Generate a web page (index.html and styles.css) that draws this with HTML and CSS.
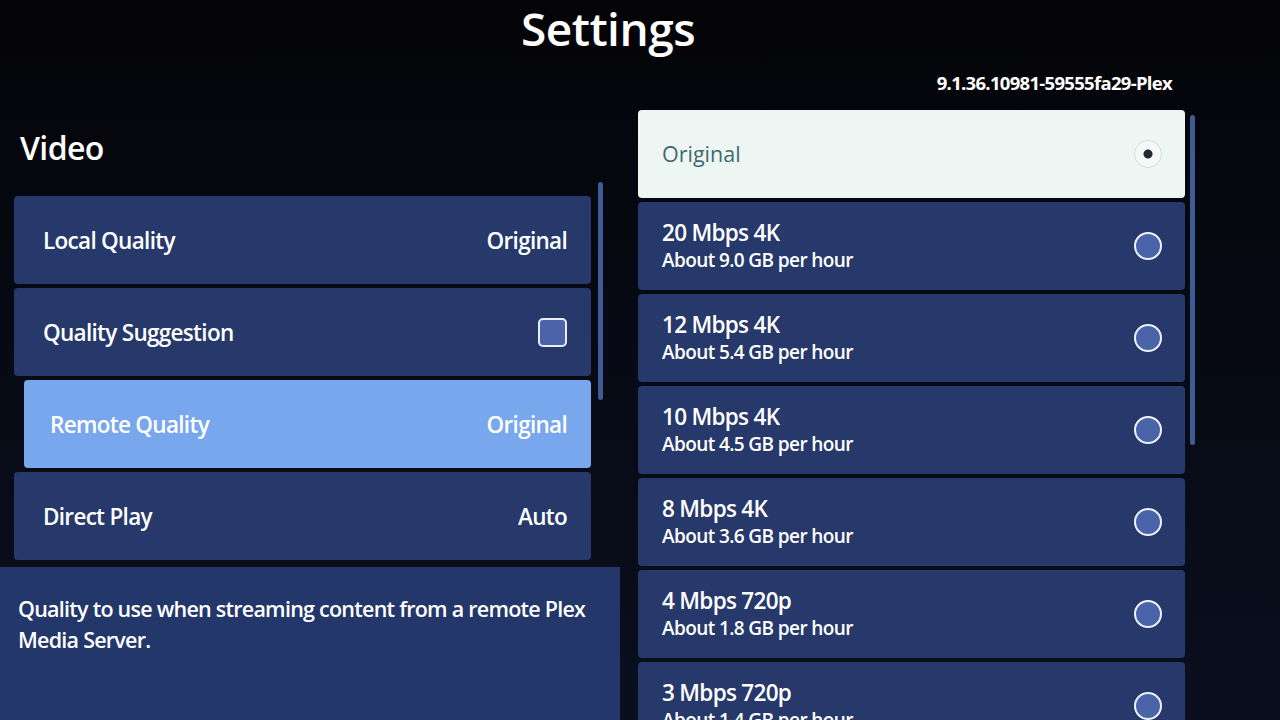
FILE: index.html
```html
<!DOCTYPE html>
<html lang="en">
<head>
    <meta charset="UTF-8">
    <meta name="viewport" content="width=device-width, initial-scale=1.0">
    <title>Settings</title>
    <link rel="stylesheet" href="styles.css">
</head>
<body>

<div class="page">
    <h1 class="title">Settings</h1>

    <div class="columns">
        <!-- Coloana stanga: setari video -->
        <div class="left-panel">
            <h2 class="section-title">Video</h2>

            <div class="list-wrap">
                <div class="settings-list">
                    <div class="setting-row">
                        <span class="setting-label">Local Quality</span>
                        <span class="setting-value">Original</span>
                    </div>
                    <div class="setting-row">
                        <span class="setting-label">Quality Suggestion</span>
                        <span class="checkbox"></span>
                    </div>
                    <div class="setting-row focused">
                        <span class="setting-label">Remote Quality</span>
                        <span class="setting-value">Original</span>
                    </div>
                    <div class="setting-row">
                        <span class="setting-label">Direct Play</span>
                        <span class="setting-value">Auto</span>
                    </div>
                </div>
                <div class="scrollbar left-scroll"></div>
            </div>

            <div class="description">
                Quality to use when streaming content from a remote Plex Media Server.
            </div>
        </div>

        <!-- Coloana dreapta: optiuni de calitate -->
        <div class="right-panel">
            <div class="version">9.1.36.10981-59555fa29-Plex</div>

            <div class="list-wrap">
                <div class="options-list">
                    <div class="option-row selected">
                        <span class="option-title">Original</span>
                        <span class="radio checked"></span>
                    </div>
                    <div class="option-row">
                        <div class="option-text">
                            <span class="option-title">20 Mbps 4K</span>
                            <span class="option-sub">About 9.0 GB per hour</span>
                        </div>
                        <span class="radio"></span>
                    </div>
                    <div class="option-row">
                        <div class="option-text">
                            <span class="option-title">12 Mbps 4K</span>
                            <span class="option-sub">About 5.4 GB per hour</span>
                        </div>
                        <span class="radio"></span>
                    </div>
                    <div class="option-row">
                        <div class="option-text">
                            <span class="option-title">10 Mbps 4K</span>
                            <span class="option-sub">About 4.5 GB per hour</span>
                        </div>
                        <span class="radio"></span>
                    </div>
                    <div class="option-row">
                        <div class="option-text">
                            <span class="option-title">8 Mbps 4K</span>
                            <span class="option-sub">About 3.6 GB per hour</span>
                        </div>
                        <span class="radio"></span>
                    </div>
                    <div class="option-row">
                        <div class="option-text">
                            <span class="option-title">4 Mbps 720p</span>
                            <span class="option-sub">About 1.8 GB per hour</span>
                        </div>
                        <span class="radio"></span>
                    </div>
                    <div class="option-row">
                        <div class="option-text">
                            <span class="option-title">3 Mbps 720p</span>
                            <span class="option-sub">About 1.4 GB per hour</span>
                        </div>
                        <span class="radio"></span>
                    </div>
                </div>
                <div class="scrollbar right-scroll"></div>
            </div>
        </div>
    </div>
</div>

</body>
</html>
```

FILE: styles.css
```css
html, body {
    margin: 0;
    height: 100%;
}

body {
    background-color: #05060b;
    background-image: linear-gradient(180deg, #040407 0%, #070a14 45%, #0a0f1e 100%);
    font-family: "Open Sans", "Noto Sans", Arial, sans-serif;
    color: #ffffff;
    overflow: hidden;
}

.page {
    width: 1280px;
    height: 720px;
    overflow: hidden;
}

.title {
    margin: 0;
    height: 62px;
    padding-right: 64px;
    text-align: center;
    font-size: 46px;
    font-weight: 600;
    line-height: 56px;
    letter-spacing: -0.5px;
}

.columns {
    display: flex;
}

/* stanga */
.left-panel {
    width: 620px;
    display: flex;
    flex-direction: column;
}

.section-title {
    margin: 66px 0 28px 20px;
    font-size: 32px;
    font-weight: 600;
    line-height: 40px;
    letter-spacing: -0.6px;
}

.list-wrap {
    display: flex;
}

.settings-list {
    width: 577px;
    margin-left: 14px;
    display: flex;
    flex-direction: column;
    gap: 4px;
}

.setting-row {
    height: 88px;
    padding: 0 24px 0 29px;
    display: flex;
    justify-content: space-between;
    align-items: center;
    background-color: #27396b;
    border-radius: 4px;
}

.setting-row.focused {
    background-color: #78a7ee;
    margin-left: 10px;
    padding-left: 26px;
}

.setting-label,
.setting-value {
    font-size: 22.5px;
    font-weight: 600;
    letter-spacing: -0.7px;
}

.checkbox {
    width: 25px;
    height: 25px;
    border: 2px solid #e8eefc;
    border-radius: 5px;
    background-color: #4b64a9;
}

.scrollbar {
    width: 5px;
    border-radius: 3px;
    background-color: #3d5b95;
}

.left-scroll {
    margin-left: 7px;
    margin-top: -14px;
    height: 218px;
}

.description {
    margin-top: 7px;
    height: 160px;
    padding: 26px 24px 0 18px;
    background-color: #23376a;
    font-size: 21.5px;
    font-weight: 600;
    line-height: 31px;
    letter-spacing: -0.75px;
}

/* dreapta */
.right-panel {
    width: 562px;
    margin-left: 18px;
}

.version {
    width: 534px;
    margin-top: 10px;
    margin-bottom: 16px;
    text-align: right;
    font-size: 18.5px;
    font-weight: 700;
    line-height: 22px;
    letter-spacing: -0.7px;
}

.options-list {
    width: 547px;
    display: flex;
    flex-direction: column;
    gap: 4px;
}

.option-row {
    height: 88px;
    flex-shrink: 0;
    padding: 0 23px 0 24px;
    display: flex;
    justify-content: space-between;
    align-items: center;
    background-color: #27396b;
    border-radius: 4px;
}

.option-row.selected {
    background-color: #eef6f4;
}

.option-row.selected .option-title {
    color: #3e6a6e;
    font-weight: 400;
    font-size: 21.5px;
    letter-spacing: 0;
}

.option-text {
    display: flex;
    flex-direction: column;
}

.option-title {
    font-size: 22.5px;
    font-weight: 600;
    line-height: 28px;
    letter-spacing: -0.7px;
}

.option-sub {
    font-size: 19px;
    font-weight: 600;
    line-height: 26px;
    letter-spacing: -0.6px;
}

.radio {
    width: 24px;
    height: 24px;
    border: 2px solid #eef2fb;
    border-radius: 50%;
    background-color: #4b64a9;
}

.radio.checked {
    width: 26px;
    height: 26px;
    border: 1px solid #d6dedd;
    background: radial-gradient(circle, #1e2a33 0 4px, #f3f8f7 5px);
}

.right-scroll {
    margin-left: 5px;
    margin-top: 5px;
    height: 330px;
}
```
